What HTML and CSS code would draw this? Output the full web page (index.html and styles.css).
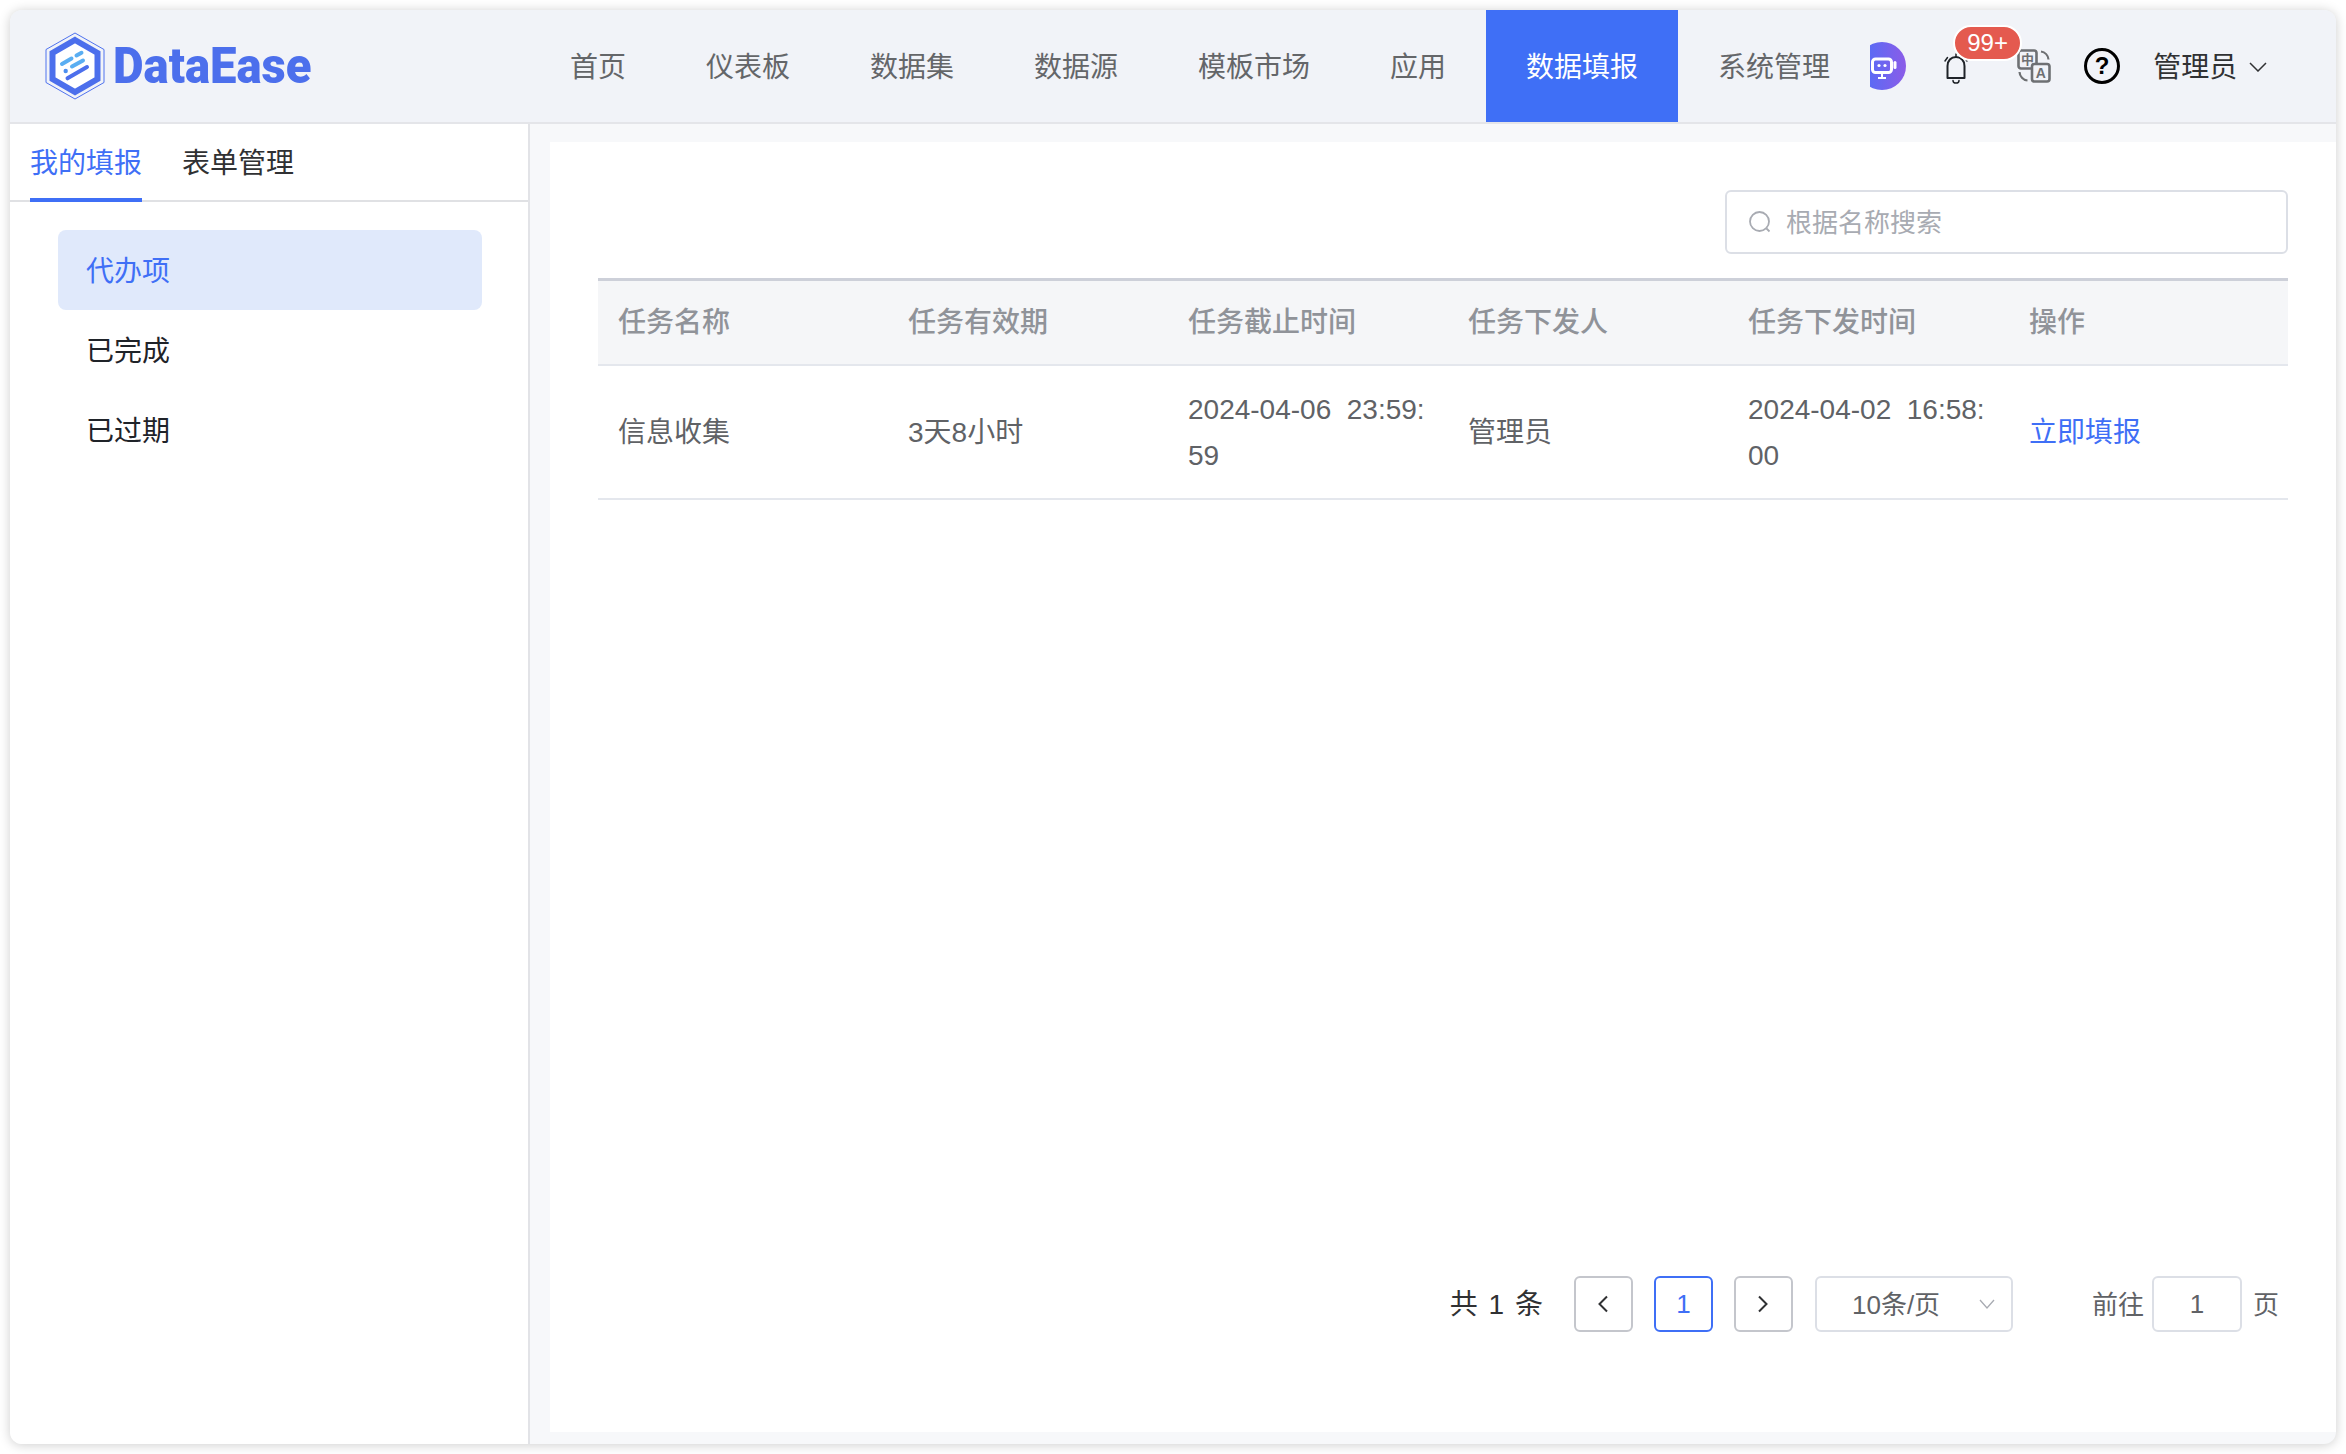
FILE: index.html
```html
<!DOCTYPE html>
<html lang="zh-CN">

<head>
    <meta charset="UTF-8">
    <title>DataEase</title>
    <link rel="stylesheet" href="styles.css">
</head>

<body>
    <div class="window">
        <header class="header">
            <div class="brand">
                <svg class="logo" viewBox="0 0 60 68" width="60" height="68">
                    <polygon points="30,1 59,17.5 59,50.5 30,67 1,50.5 1,17.5" fill="none" stroke="#4f72ee" stroke-width="1" />
                    <polygon points="30,8 52.5,21 52.5,47 30,60 7.5,47 7.5,21" fill="#fff" stroke="#4c6fec" stroke-width="6" stroke-linejoin="miter" />
                    <g fill="none" stroke-linecap="round" stroke-width="4">
                        <path d="M31.5 23.5L36.5 20.8" stroke="#5aaef2" />
                        <path d="M17 32L26.5 26.5" stroke="#5aaef2" />
                        <path d="M27 34.5L38 28.5" stroke="#5aaef2" />
                        <path d="M22.5 46.3L42 35" stroke="#4c6fec" />
                    </g>
                    <circle cx="20.7" cy="39" r="2.2" fill="#4c8ff0" />
                </svg>
                <span class="brand-name">DataEase</span>
            </div>
            <nav class="nav">
                <a class="nav-item">首页</a>
                <a class="nav-item">仪表板</a>
                <a class="nav-item">数据集</a>
                <a class="nav-item">数据源</a>
                <a class="nav-item">模板市场</a>
                <a class="nav-item">应用</a>
                <a class="nav-item active">数据填报</a>
                <a class="nav-item">系统管理</a>
            </nav>
            <div class="toolbar">
                <svg class="ai-icon" viewBox="0 0 36 48" width="36" height="48">
                    <defs>
                        <linearGradient id="aiFill" x1="0" y1="0" x2="1" y2="0">
                            <stop offset="0" stop-color="#4d6ff8" />
                            <stop offset="1" stop-color="#8b5ce8" />
                        </linearGradient>
                    </defs>
                    <circle cx="12" cy="24" r="24" fill="url(#aiFill)" />
                    <rect x="2.5" y="17" width="19" height="13.5" rx="3" fill="none" stroke="#fff" stroke-width="3" />
                    <rect x="23.5" y="19" width="3" height="8" rx="1.5" fill="#fff" />
                    <circle cx="9" cy="23.5" r="1.6" fill="#fff" />
                    <circle cx="15" cy="23.5" r="1.6" fill="#fff" />
                    <path d="M12 31v4M8 36h8" stroke="#fff" stroke-width="2" fill="none" />
                </svg>
                <div class="bell">
                    <svg viewBox="0 0 26 32" width="26" height="32">
                        <path d="M4.5 26V14C4.5 8.5 8 5 13 5s8.500 3.500 8.500 9V26Z" fill="none" stroke="#1f2329" stroke-width="2" stroke-linejoin="round" />
                        <path d="M13 2v3M2 9l2.500-3.500M24 9l-2.500-3.500M10 28.500a3 2.600 0 0 0 6 0" fill="none" stroke="#1f2329" stroke-width="1.500" stroke-linecap="round" />
                    </svg>
                    <span class="badge">99+</span>
                </div>
                <svg class="lang" viewBox="0 0 34 34" width="34" height="34">
                    <rect x="1.500" y="1.500" width="18" height="18" rx="2.500" fill="none" stroke="#6e7073" stroke-width="2.600" />
                    <text x="10.500" y="15" font-size="13" font-weight="700" text-anchor="middle" fill="#6e7073">中</text>
                    <path d="M24 2.500a9 9 0 0 1 7.500 8M2.500 23a9 9 0 0 0 8 8.500" fill="none" stroke="#6e7073" stroke-width="2.200" />
                    <rect x="15" y="15" width="17.500" height="17.500" rx="2.500" fill="#f1f3f8" stroke="#6e7073" stroke-width="2.600" />
                    <text x="23.700" y="29" font-size="14" font-weight="700" text-anchor="middle" fill="#6e7073">A</text>
                </svg>
                <div class="help">?</div>
                <span class="user">管理员</span>
                <svg class="user-arrow" viewBox="0 0 18 10" width="18" height="10">
                    <path d="M1 1l8 8 8-8" fill="none" stroke="#303133" stroke-width="1.500" />
                </svg>
            </div>
        </header>

        <div class="body">
            <aside class="sidebar">
                <div class="tabs">
                    <span class="tab active">我的填报</span>
                    <span class="tab">表单管理</span>
                </div>
                <ul class="menu">
                    <li class="menu-item active">代办项</li>
                    <li class="menu-item">已完成</li>
                    <li class="menu-item">已过期</li>
                </ul>
            </aside>

            <main class="main">
                <div class="card">
                    <div class="search-row">
                        <div class="search">
                            <svg viewBox="0 0 24 24" width="24" height="24">
                                <circle cx="11.500" cy="11.500" r="9.500" fill="none" stroke="#a8abb2" stroke-width="1.800" />
                                <path d="M18.500 18.500l3 3" stroke="#a8abb2" stroke-width="1.800" />
                            </svg>
                            <span class="search-text">根据名称搜索</span>
                        </div>
                    </div>

                    <table class="task-table">
                        <colgroup>
                            <col class="col-first">
                            <col class="col">
                            <col class="col">
                            <col class="col">
                            <col class="col-time">
                            <col class="col-last">
                        </colgroup>
                        <thead>
                            <tr>
                                <th>任务名称</th>
                                <th>任务有效期</th>
                                <th>任务截止时间</th>
                                <th>任务下发人</th>
                                <th>任务下发时间</th>
                                <th>操作</th>
                            </tr>
                        </thead>
                        <tbody>
                            <tr>
                                <td>信息收集</td>
                                <td>3天8小时</td>
                                <td>2024-04-06&nbsp;&nbsp;23:59:59</td>
                                <td>管理员</td>
                                <td>2024-04-02&nbsp;&nbsp;16:58:00</td>
                                <td><a class="link">立即填报</a></td>
                            </tr>
                        </tbody>
                    </table>

                    <div class="pager">
                        <span class="pager-total">共 1 条</span>
                        <span class="pager-btn first">
                            <svg viewBox="0 0 12 18" width="12" height="18"><path d="M10 1.500L2.500 9l7.500 7.500" fill="none" stroke="#303133" stroke-width="2" /></svg>
                        </span>
                        <span class="pager-btn current">1</span>
                        <span class="pager-btn">
                            <svg viewBox="0 0 12 18" width="12" height="18"><path d="M2 1.500L9.500 9 2 16.500" fill="none" stroke="#303133" stroke-width="2" /></svg>
                        </span>
                        <span class="pager-size">
                            <span class="pager-size-text">10条/页</span>
                            <svg viewBox="0 0 16 10" width="16" height="10"><path d="M1 1l7 8 7-8" fill="none" stroke="#a8abb2" stroke-width="1.300" /></svg>
                        </span>
                        <span class="pager-label goto">前往</span>
                        <span class="pager-input">1</span>
                        <span class="pager-label unit">页</span>
                    </div>
                </div>
            </main>
        </div>
    </div>
</body>

</html>
```

FILE: styles.css
```css
* {
    box-sizing: border-box;
}

html,
body {
    height: 100%;
}

body {
    margin: 0;
    padding: 10px;
    background: #fff;
    font-family: "Liberation Sans", "Noto Sans CJK SC", sans-serif;
    font-size: 28px;
    color: #303133;
    overflow: hidden;
}

.window {
    height: 1434px;
    display: flex;
    flex-direction: column;
    background: #f7f8fa;
    border-radius: 12px;
    box-shadow: 0 1px 12px rgba(0, 0, 0, 0.2);
    overflow: hidden;
}

/* Header */
.header {
    height: 114px;
    flex: none;
    display: flex;
    background: #f1f3f8;
    border-bottom: 2px solid #e4e5e9;
}

.brand {
    width: 520px;
    flex: none;
    display: flex;
    align-items: center;
    padding-left: 35px;
    gap: 8px;
}

.brand-name {
    font-family: Roboto, sans-serif;
    font-weight: 900;
    font-size: 50px;
    color: #4c6fec;
    transform: scaleX(0.945);
    transform-origin: left center;
}

.nav {
    display: flex;
    flex: none;
}

.nav-item {
    display: flex;
    align-items: center;
    padding: 0 40px 3px;
    color: #646669;
}

.nav-item.active {
    background: #3f6ff6;
    color: #fff;
}

.toolbar {
    display: flex;
    align-items: center;
}

.ai-icon {
    display: block;
}

.bell {
    position: relative;
    margin-left: 37px;
    margin-top: 4px;
    height: 32px;
}

.bell svg {
    display: block;
}

.badge {
    position: absolute;
    left: 10px;
    top: -27px;
    width: 69px;
    height: 36px;
    border: 2px solid #fff;
    border-radius: 18px;
    background: #e45a4f;
    color: #fff;
    font-size: 24px;
    line-height: 32px;
    text-align: center;
}

.lang {
    margin-left: 48px;
}

.help {
    width: 36px;
    height: 36px;
    margin-left: 33px;
    border: 3px solid #000;
    border-radius: 50%;
    color: #000;
    font-size: 24px;
    font-weight: 700;
    line-height: 30px;
    text-align: center;
}

.user {
    margin-left: 33px;
    padding-bottom: 3px;
}

.user-arrow {
    margin-left: 12px;
    margin-top: 2px;
}

/* Body */
.body {
    flex: 1;
    min-height: 0;
    display: flex;
}

.sidebar {
    width: 520px;
    flex: none;
    background: #fff;
    border-right: 2px solid #e2e3e7;
}

.tabs {
    height: 78px;
    display: flex;
    gap: 40px;
    padding-left: 20px;
    border-bottom: 2px solid #e0e1e4;
}

.tab {
    height: 78px;
    line-height: 79px;
}

.tab.active {
    color: #3f6ff6;
    border-bottom: 4px solid #3f6ff6;
}

.menu {
    list-style: none;
    margin: 28px 0 0 48px;
    padding: 0;
    width: 424px;
}

.menu-item {
    height: 80px;
    line-height: 83px;
    padding-left: 28px;
    border-radius: 8px;
    color: #1f2329;
}

.menu-item.active {
    background: #e0e9fb;
    color: #3f6ff6;
}

/* Content */
.main {
    flex: 1;
    padding: 18px 0 12px 20px;
    min-width: 0;
}

.card {
    height: 100%;
    display: flex;
    flex-direction: column;
    padding: 48px 48px 100px 48px;
    background: #fff;
}

.search-row {
    display: flex;
    justify-content: flex-end;
}

.search {
    width: 563px;
    height: 64px;
    display: flex;
    align-items: center;
    gap: 14px;
    padding-left: 21px;
    border: 2px solid #dcdfe6;
    border-radius: 6px;
    color: #a8abb2;
    font-size: 26px;
}

.search-text {
    padding-bottom: 3px;
}

.task-table {
    width: 1690px;
    margin-top: 24px;
    border-collapse: separate;
    border-spacing: 0;
    table-layout: fixed;
}

.col-first {
    width: 290px;
}

.col {
    width: 280px;
}

.col-time {
    width: 281px;
}

.col-last {
    width: 279px;
}

.task-table th {
    height: 88px;
    padding: 0 12px 6px 20px;
    background: #f5f6f8;
    border-top: 3px solid #cdd0d9;
    border-bottom: 2px solid #e4e7ed;
    color: #909399;
    font-weight: 500;
    text-align: left;
}

.task-table td {
    padding: 21px 12px 19px 20px;
    line-height: 46px;
    border-bottom: 2px solid #e4e7ed;
    color: #606266;
    word-break: break-all;
}

.link {
    color: #3f6ff6;
}

.pager {
    margin-top: auto;
    margin-right: 9px;
    display: flex;
    justify-content: flex-end;
    align-items: center;
    height: 56px;
}

.pager-total {
    word-spacing: 3px;
    padding-bottom: 4px;
}

.pager-btn {
    width: 59px;
    height: 56px;
    margin-left: 21px;
    display: flex;
    align-items: center;
    justify-content: center;
    border: 2px solid #c4c6cc;
    border-radius: 6px;
    font-size: 26px;
}

.pager-btn.first {
    margin-left: 31px;
}

.pager-btn.current {
    border-color: #3f6ff6;
    color: #3f6ff6;
}

.pager-size {
    width: 198px;
    height: 56px;
    margin-left: 22px;
    display: flex;
    align-items: center;
    justify-content: space-between;
    padding: 0 16px 0 35px;
    border: 2px solid #dcdfe6;
    border-radius: 6px;
    color: #606266;
    font-size: 26px;
}

.pager-size-text {
    padding-bottom: 4px;
}

.pager-label {
    color: #606266;
    font-size: 26px;
    padding-bottom: 4px;
}

.pager-label.goto {
    margin-left: 79px;
}

.pager-label.unit {
    margin-left: 11px;
}

.pager-input {
    width: 90px;
    height: 56px;
    margin-left: 8px;
    border: 2px solid #dcdfe6;
    border-radius: 6px;
    color: #606266;
    font-size: 26px;
    line-height: 52px;
    text-align: center;
}
```
